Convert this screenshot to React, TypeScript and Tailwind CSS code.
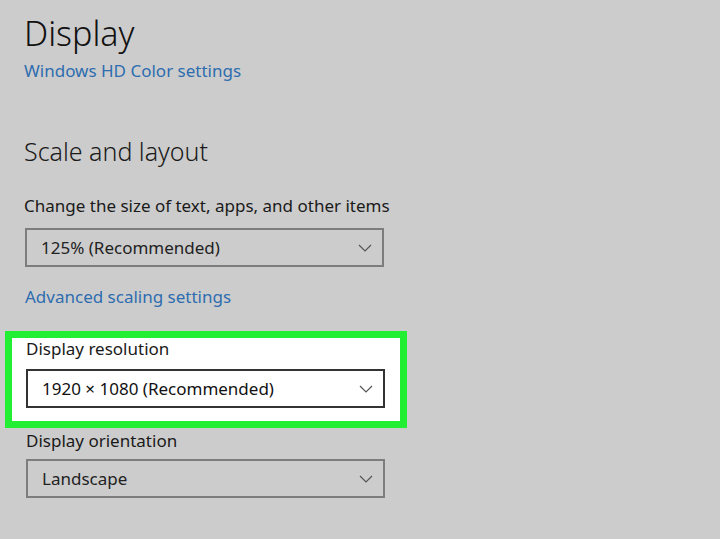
import React from 'react';

function Chevron() {
  return (
    <svg width="14" height="8" viewBox="0 0 14 8" fill="none" className="shrink-0">
      <path d="M1 1l6 6 6-6" stroke="#555" strokeWidth="1.2" />
    </svg>
  );
}

function Select({ value, active }: { value: string; active?: boolean }) {
  return (
    <div
      className={
        'flex h-[39px] w-[359px] items-center justify-between border-2 pl-[14px] pr-[10px] text-[17px] ' +
        (active ? 'border-[#333333] bg-white text-[#111]' : 'border-[#7d7d7d] bg-[#cccccc] text-[#222]')
      }
    >
      <span>{value}</span>
      <Chevron />
    </div>
  );
}

export default function App() {
  return (
    <div
      className="h-[539px] w-[720px] overflow-hidden bg-[#cccccc] text-[#1a1a1a]"
      style={{ fontFamily: '"Segoe UI", "Noto Sans", "Open Sans", sans-serif' }}
    >
      <div className="pl-[24px] pt-[11px]">
        <h1 className="text-[34px] font-light leading-[44px] text-[#111]">Display</h1>
        <a className="mt-[6px] block text-[17px] leading-[20px] text-[#2e6db0]">Windows HD Color settings</a>

        <h2 className="mt-[54px] text-[25px] font-light leading-[32px] text-[#1a1a1a]">Scale and layout</h2>
        <p className="mt-[28px] text-[17px] leading-[22px]">Change the size of text, apps, and other items</p>
        <div className="mt-[11px] pl-px">
          <Select value="125% (Recommended)" />
        </div>
        <a className="mt-[19px] block pl-px text-[17px] leading-[22px] text-[#2e6db0]">Advanced scaling settings</a>
      </div>

      <div className="ml-[5px] mt-[23px] w-[402px] border-[7px] border-[#22ee33] bg-white pb-[13px] pl-[14px]">
        <p className="text-[17px] leading-[22px]">Display resolution</p>
        <div className="mt-[9px]">
          <Select value="1920 × 1080 (Recommended)" active />
        </div>
      </div>

      <div className="pl-[26px] pt-[2px]">
        <p className="text-[17px] leading-[22px]">Display orientation</p>
        <div className="mt-[7px]">
          <Select value="Landscape" />
        </div>
      </div>
    </div>
  );
}
